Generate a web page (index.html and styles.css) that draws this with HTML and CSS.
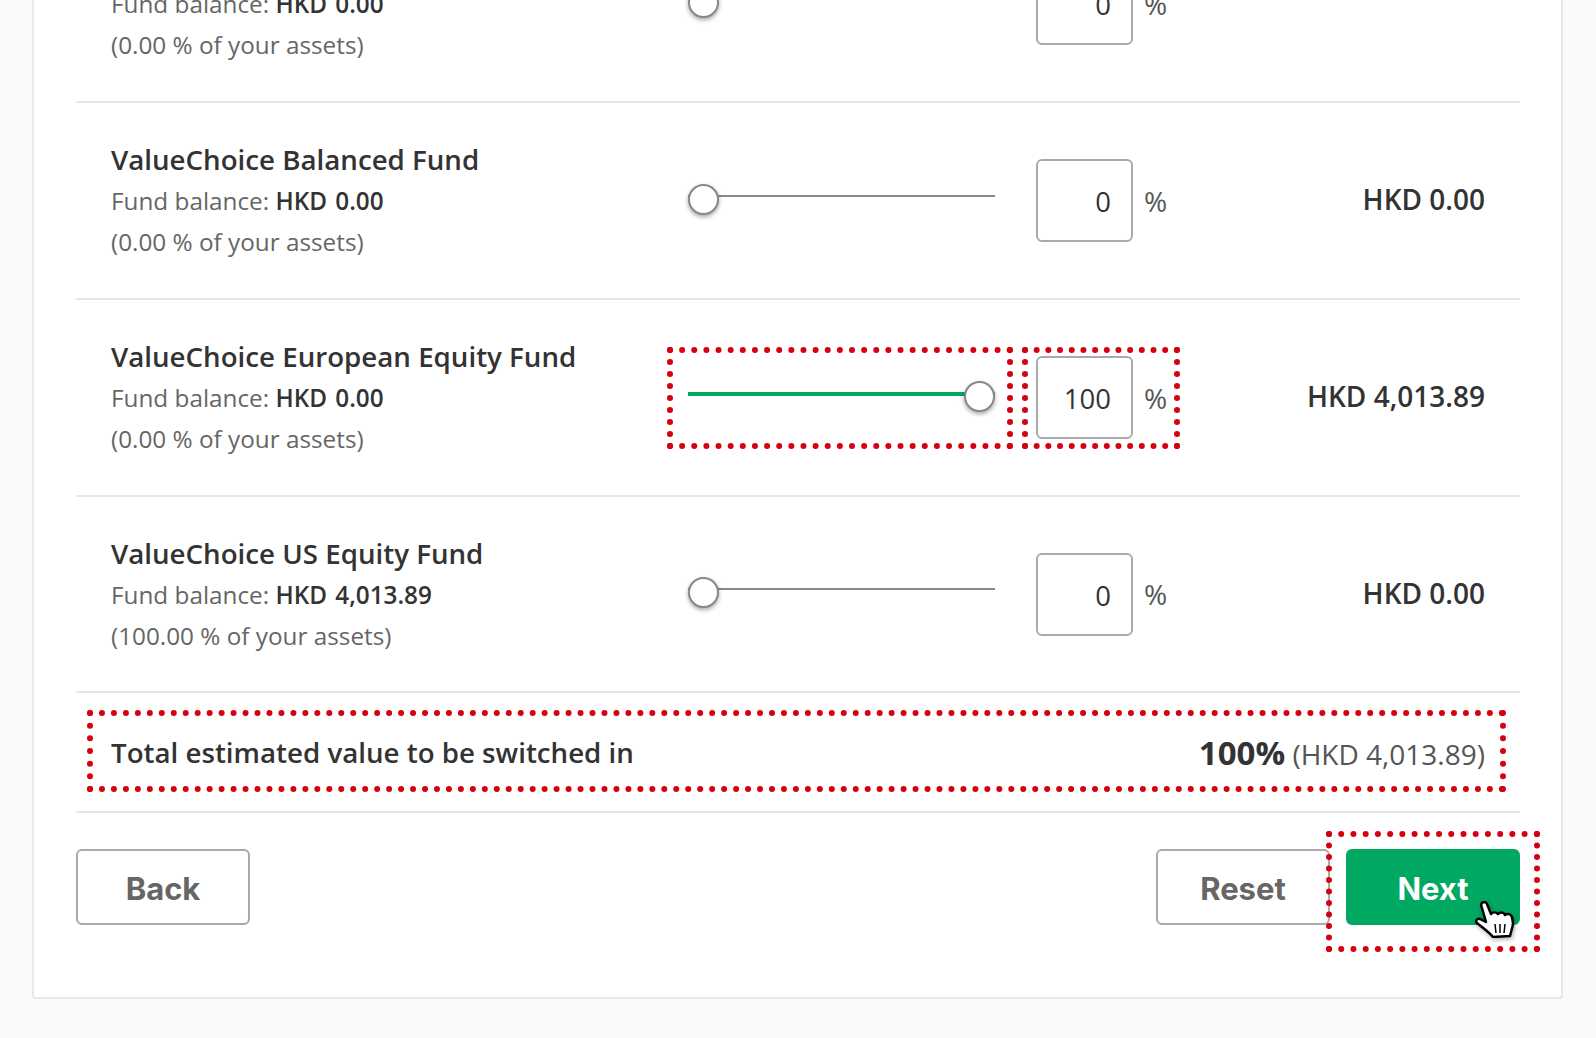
FILE: index.html
```html
<!DOCTYPE html>
<html lang="en">
<head>
  <meta charset="UTF-8">
  <title>Switch funds</title>
  <link rel="stylesheet" href="styles.css">
</head>
<body>
  <div class="card">
    <div class="fund-row">
      <div class="fund-info">
        <div class="fund-name">ValueChoice Asia Equity Fund</div>
        <div class="fund-line">Fund balance: <b>HKD 0.00</b></div>
        <div class="fund-line">(0.00 % of your assets)</div>
      </div>
      <div class="slider"><div class="track"></div><div class="thumb"></div></div>
      <div class="pct-box">0</div>
      <div class="pct-sign">%</div>
      <div class="amount"></div>
    </div>

    <div class="fund-row">
      <div class="fund-info">
        <div class="fund-name">ValueChoice Balanced Fund</div>
        <div class="fund-line">Fund balance: <b>HKD 0.00</b></div>
        <div class="fund-line">(0.00 % of your assets)</div>
      </div>
      <div class="slider"><div class="track"></div><div class="thumb"></div></div>
      <div class="pct-box">0</div>
      <div class="pct-sign">%</div>
      <div class="amount">HKD 0.00</div>
    </div>

    <div class="fund-row">
      <div class="fund-info">
        <div class="fund-name">ValueChoice European Equity Fund</div>
        <div class="fund-line">Fund balance: <b>HKD 0.00</b></div>
        <div class="fund-line">(0.00 % of your assets)</div>
      </div>
      <div class="slider slider-full"><div class="track"></div><div class="thumb"></div></div>
      <div class="pct-box">100</div>
      <div class="pct-sign">%</div>
      <div class="amount">HKD 4,013.89</div>
      <div class="mark mark-slider"></div>
      <div class="mark mark-input"></div>
    </div>

    <div class="fund-row fund-row-last">
      <div class="fund-info">
        <div class="fund-name">ValueChoice US Equity Fund</div>
        <div class="fund-line">Fund balance: <b>HKD 4,013.89</b></div>
        <div class="fund-line">(100.00 % of your assets)</div>
      </div>
      <div class="slider"><div class="track"></div><div class="thumb"></div></div>
      <div class="pct-box">0</div>
      <div class="pct-sign">%</div>
      <div class="amount">HKD 0.00</div>
    </div>

    <div class="total-row">
      <div class="total-label">Total estimated value to be switched in</div>
      <div class="total-value"><b>100%</b> (HKD 4,013.89)</div>
      <div class="mark mark-total"></div>
    </div>

    <div class="actions">
      <button class="btn">Back</button>
      <div class="actions-right">
        <button class="btn btn-reset">Reset</button>
        <button class="btn btn-next">Next</button>
        <div class="mark mark-next"></div>
        <svg class="hand" viewBox="0 0 41 37" width="41" height="37">
          <path d="M8 2C10 0 12 1 13 3L17 13C19 11 22 11 24 13C26 11 30 11 31 14C33 12 37 13 38 16L39 22C39 26 37 30 36 35L19 36C15 31 9 27 3 22C1 20 3 17 6 18L12 21L8 7C7 5 7 3 8 2Z" fill="#fff" stroke="#000" stroke-width="2.500" stroke-linejoin="round"/>
          <path d="M21 23L22 32M26 23V32M31 23L30 32" fill="none" stroke="#000" stroke-width="1.500"/>
        </svg>
      </div>
    </div>
  </div>
</body>
</html>
```

FILE: styles.css
```css
body {
  margin: 0;
  height: 1038px;
  overflow: hidden;
  background-color: #fafafa;
  font-family: "Open Sans", sans-serif;
  color: #333;
}

.card {
  box-sizing: border-box;
  width: 1531px;
  height: 1093px;
  margin: -94px 0 0 32px;
  padding: 0 41px 0 42px;
  background-color: #fff;
  border: 2px solid #e8e8e8;
  border-top: none;
  border-radius: 0 0 4px 4px;
}

.fund-row {
  position: relative;
  box-sizing: border-box;
  height: 197px;
  display: flex;
  align-items: center;
  padding: 0 35px;
  border-bottom: 2px solid #e6e6e6;
}

.fund-row-last {
  height: 196px;
}

.fund-info {
  width: 577px;
  flex: none;
}

.fund-name {
  font-size: 27.700px;
  font-weight: 600;
  line-height: 41px;
}

.fund-line {
  font-size: 24.300px;
  line-height: 41px;
  color: #666;
}

.fund-line b {
  font-weight: 600;
  word-spacing: 2px;
  color: #333;
}

.slider {
  position: relative;
  flex: none;
  width: 307px;
  height: 32px;
  margin-bottom: 2px;
}

.track {
  position: absolute;
  left: 0;
  right: 0;
  top: 11px;
  height: 2px;
  background-color: #888;
}

.thumb {
  position: absolute;
  left: 0;
  top: 0;
  box-sizing: border-box;
  width: 31px;
  height: 31px;
  background-color: #fff;
  border: 2px solid #888;
  border-radius: 50%;
  box-shadow: 0 2px 4px rgba(0, 0, 0, 0.35);
}

.slider-full .track {
  height: 4px;
  background-color: #00a862;
}

.slider-full .thumb {
  left: 276px;
}

.pct-box {
  box-sizing: border-box;
  flex: none;
  width: 97px;
  height: 83px;
  margin-left: 41px;
  padding-right: 20px;
  border: 2px solid #aaa;
  border-radius: 6px;
  font-size: 27.500px;
  line-height: 81px;
  text-align: right;
}

.pct-sign {
  margin-left: 11px;
  font-size: 28px;
  color: #555;
}

.amount {
  margin-left: auto;
  margin-bottom: 3px;
  font-size: 28px;
  font-weight: 600;
}

.total-row {
  position: relative;
  box-sizing: border-box;
  height: 120px;
  display: flex;
  justify-content: space-between;
  align-items: center;
  padding: 0 35px;
  border-bottom: 2px solid #e6e6e6;
}

.total-label {
  font-size: 27.700px;
  font-weight: 600;
}

.total-value {
  font-size: 28px;
  color: #555;
}

.total-value b {
  font-size: 33px;
  font-weight: 700;
  color: #333;
}

.actions {
  display: flex;
  justify-content: space-between;
  padding-top: 36px;
}

.actions-right {
  position: relative;
  display: flex;
  gap: 16px;
}

.btn {
  box-sizing: border-box;
  width: 174px;
  height: 76px;
  padding-top: 4px;
  background-color: #fff;
  border: 2px solid #aaa;
  border-radius: 6px;
  color: #666;
  font-family: Inter, sans-serif;
  font-size: 31px;
  font-weight: 700;
}

.btn-next {
  background-color: #00a862;
  border-color: #00a862;
  color: #fff;
}

.mark {
  position: absolute;
  box-sizing: border-box;
  border: 6px dotted #d6000f;
}

.mark-slider {
  left: 591px;
  top: 47px;
  width: 346px;
  height: 102px;
}

.mark-input {
  left: 946px;
  top: 47px;
  width: 158px;
  height: 102px;
}

.mark-total {
  left: 11px;
  top: 17px;
  width: 1419px;
  height: 82px;
}

.mark-next {
  left: 170px;
  top: -18px;
  width: 214px;
  height: 121px;
}

.hand {
  position: absolute;
  left: 318px;
  top: 52px;
  filter: drop-shadow(1px 2px 2px rgba(0, 0, 0, 0.3));
}
```
